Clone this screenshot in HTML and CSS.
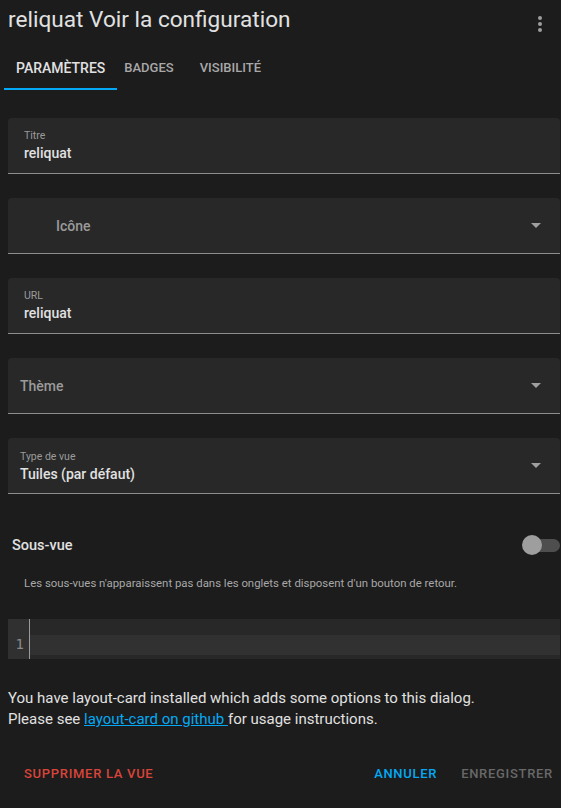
FILE: index.html
```html
<!DOCTYPE html>
<html lang="fr">
<head>
<meta charset="utf-8">
<link rel="stylesheet" href="styles.css">
</head>
<body>
<div class="dialog">
  <header class="header">
    <h1 class="title">reliquat Voir la configuration</h1>
    <svg class="more" viewBox="0 0 24 24" width="24" height="24"><path fill="currentColor" d="M12,16A2,2 0 0,1 14,18A2,2 0 0,1 12,20A2,2 0 0,1 10,18A2,2 0 0,1 12,16M12,10A2,2 0 0,1 14,12A2,2 0 0,1 12,14A2,2 0 0,1 10,12A2,2 0 0,1 12,10M12,4A2,2 0 0,1 14,6A2,2 0 0,1 12,8A2,2 0 0,1 10,6A2,2 0 0,1 12,4Z"/></svg>
  </header>
  <nav class="tabs">
    <div class="tab active">Paramètres</div>
    <div class="tab t2">Badges</div>
    <div class="tab t3">Visibilité</div>
  </nav>
  <main class="content">
    <div class="field">
      <div class="label">Titre</div>
      <div class="value">reliquat</div>
    </div>
    <div class="field select">
      <div class="placeholder icon-ph">Icône</div>
      <span class="arrow"></span>
    </div>
    <div class="field">
      <div class="label">URL</div>
      <div class="value">reliquat</div>
    </div>
    <div class="field select">
      <div class="placeholder">Thème</div>
      <span class="arrow"></span>
    </div>
    <div class="field select">
      <div class="stack">
        <div class="label">Type de vue</div>
        <div class="value">Tuiles (par défaut)</div>
      </div>
      <span class="arrow"></span>
    </div>
    <div class="switch-row">
      <span class="switch-label">Sous-vue</span>
      <span class="switch"><span class="track"></span><span class="thumb"></span></span>
    </div>
    <p class="helper">Les sous-vues n'apparaissent pas dans les onglets et disposent d'un bouton de retour.</p>
    <div class="editor">
      <div class="gutter"><span class="ln">1</span></div>
      <div class="code"><div class="active-line"></div></div>
    </div>
    <p class="note">You have layout-card installed which adds some options to this dialog.<br>Please see <a href="#">layout-card on github </a>for usage instructions.</p>
  </main>
  <footer class="actions">
    <button class="btn danger">Supprimer la vue</button>
    <div class="right">
      <button class="btn primary">Annuler</button>
      <button class="btn disabled">Enregistrer</button>
    </div>
  </footer>
</div>
</body>
</html>
```

FILE: styles.css
```css
html, body {
  margin: 0;
  padding: 0;
  background: #1c1c1c;
}
body {
  font-family: Roboto, "Noto Sans", sans-serif;
  color: #e1e1e1;
  width: 561px;
  overflow: hidden;
}
.header {
  display: flex;
  justify-content: space-between;
  align-items: flex-start;
  height: 44px;
  padding: 0 9px 0 8px;
}
.title {
  margin: 0;
  font-size: 22.6px;
  font-weight: 400;
  line-height: 40px;
  color: #e1e1e1;
}
.more {
  color: #9e9e9e;
  margin-top: 12px;
}
.tabs {
  display: flex;
  height: 48px;
  padding-left: 4px;
}
.tab {
  text-transform: uppercase;
  font-size: 13px;
  font-weight: 500;
  color: #a8a8a8;
  line-height: 48px;
  position: relative;
}
.tab.active {
  font-size: 14px;
  color: #e1e1e1;
  padding: 0 12px;
}
.t2 { padding: 0 13px 0 7px; }
.t3 { padding: 0 12px 0 13px; }
.tab.active::after {
  content: "";
  position: absolute;
  left: 0;
  right: 0;
  bottom: 2px;
  height: 2px;
  background: #03a9f4;
}
.content {
  padding: 26px 1px 0 8px;
}
.field {
  box-sizing: border-box;
  height: 56px;
  background: #282828;
  border-radius: 4px 4px 0 0;
  border-bottom: 1px solid #8c8c8c;
  padding: 11px 16px 0;
  margin-bottom: 24px;
  position: relative;
}
.label {
  font-size: 10.5px;
  line-height: 14px;
  color: #9b9b9b;
}
.value {
  font-size: 14px;
  line-height: 20px;
  color: #e1e1e1;
  font-weight: 500;
}
.select {
  display: flex;
  align-items: center;
  justify-content: space-between;
  padding: 0 19px 0 12px;
}
.placeholder {
  font-size: 14px;
  font-weight: 500;
  color: #9b9b9b;
}
.icon-ph { padding-left: 36px; }
.stack { margin-top: 2px; }
.arrow {
  width: 0;
  height: 0;
  border-left: 5px solid transparent;
  border-right: 5px solid transparent;
  border-top: 5px solid #a0a0a0;
}
.switch-row {
  display: flex;
  justify-content: space-between;
  align-items: center;
  height: 40px;
  margin-top: 31px;
  padding-left: 4px;
}
.switch-label {
  font-size: 14.5px;
  font-weight: 500;
  color: #e1e1e1;
}
.switch {
  position: relative;
  width: 38px;
  height: 20px;
}
.track {
  position: absolute;
  right: 0;
  top: 4px;
  width: 34px;
  height: 13px;
  border-radius: 7px;
  background: #4e4e4e;
}
.thumb {
  position: absolute;
  left: 0;
  top: 0;
  width: 20px;
  height: 20px;
  border-radius: 50%;
  background: #9e9e9e;
}
.helper {
  margin: 10px 0 0 16px;
  font-size: 11.4px;
  line-height: 16px;
  color: #a8a8a8;
}
.editor {
  display: flex;
  height: 40px;
  margin-top: 28px;
  background: #282828;
}
.gutter {
  box-sizing: border-box;
  width: 22px;
  padding-right: 5px;
  background: #303030;
  border-right: 1px solid #9a9a9a;
  display: flex;
  align-items: flex-end;
  justify-content: flex-end;
}
.ln {
  font-family: "DejaVu Sans Mono", monospace;
  font-size: 14px;
  line-height: 20px;
  color: #8a8a8a;
  margin-bottom: 5px;
}
.code {
  flex: 1;
  padding-top: 16px;
}
.active-line {
  height: 20px;
  background: #313131;
}
.note {
  margin: 29px 0 0;
  font-size: 15px;
  line-height: 21px;
  color: #e1e1e1;
}
.note a {
  color: #03a9f4;
  text-decoration: underline;
}
.actions {
  display: flex;
  justify-content: space-between;
  align-items: center;
  height: 36px;
  margin-top: 25px;
  padding: 0 0 0 16px;
}
.right { display: flex; gap: 8px; }
.btn {
  background: none;
  border: 0;
  font-family: Roboto, sans-serif;
  font-size: 13px;
  font-weight: 500;
  text-transform: uppercase;
  letter-spacing: 0.7px;
  padding: 0 8px;
  height: 36px;
}
.danger { color: #d9443a; }
.primary { color: #03a9f4; }
.disabled { color: #686868; }
```
